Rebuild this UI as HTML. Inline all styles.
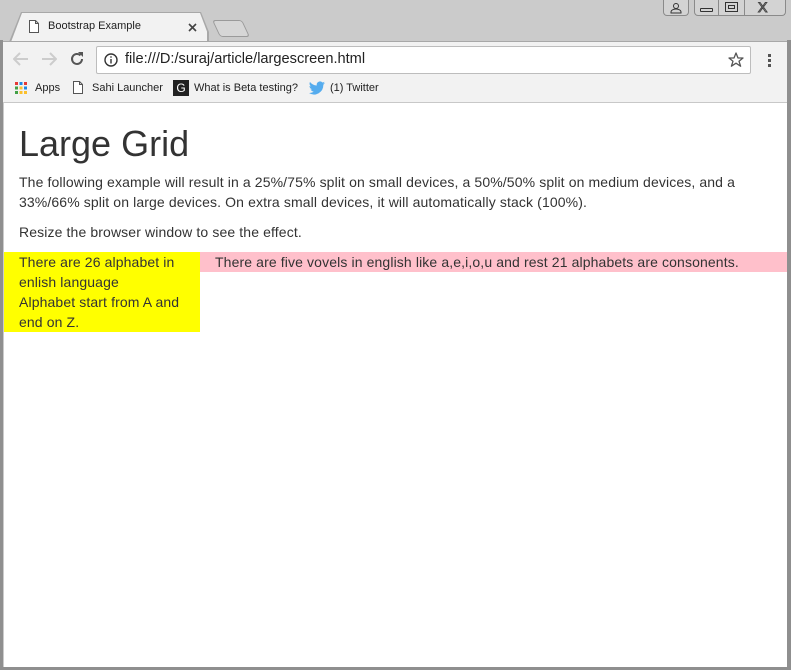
<!DOCTYPE html>
<html><head><meta charset="utf-8"><style>
*{margin:0;padding:0;box-sizing:border-box}
body{width:791px;height:670px;background:#cbcbcb;position:relative;overflow:hidden;font-family:"Liberation Sans",Arial,sans-serif}
.abs{position:absolute}
.tabbg{left:9px;top:12px;width:200px;height:30px;background:#a8a8a8;clip-path:polygon(12px 0,192px 0,204px 30px,0 30px)}
.tabin{left:11px;top:13px;width:196px;height:29px;background:#f2f2f2;clip-path:polygon(11px 0,189px 0,200px 29px,0 29px)}
.newtab{left:216px;top:20px;width:30px;height:17px;border:1px solid #9a9a9a;border-radius:3px;transform:skewX(25deg);background:#d6d6d6}
.tool{left:3px;top:41px;width:785px;height:61px;background:#f2f2f2;border-top:1px solid #a8a8a8}
.url{left:96px;top:46px;width:655px;height:28px;background:#fff;border:1px solid #bdbdbd;border-radius:2px}
.page{left:4px;top:102px;width:783px;height:565px;background:#fff;border-top:1px solid #c8c8c8}
.wbtn{top:0;height:16px;border:1px solid #8a8a8a;border-top:none;border-radius:0 0 4px 4px;background:#d3d3d3}
h1{font-weight:400;font-size:36px;color:#333;position:absolute;left:19px;top:124px;line-height:40px}
p{position:absolute;left:19px;font-size:14px;line-height:20px;color:#333;letter-spacing:0.12px}
.bm{font-size:11px;color:#222;top:82px}
</style></head><body>
<div class="abs wbtn" style="left:663px;width:26px"></div>
<svg class="abs" style="left:669px;top:2px" width="14" height="12"><circle cx="7" cy="4" r="2.5" fill="none" stroke="#333"/><path d="M2 11h10v-1a5 3 0 0 0-10 0z" fill="none" stroke="#333"/></svg>
<div class="abs wbtn" style="left:694px;width:92px"></div>
<div class="abs" style="left:718px;top:0;width:1px;height:16px;background:#8a8a8a"></div>
<div class="abs" style="left:744px;top:0;width:1px;height:16px;background:#8a8a8a"></div>
<div class="abs" style="left:700px;top:8px;width:13px;height:4px;border:1px solid #333;border-radius:1px"></div>
<div class="abs" style="left:725px;top:2px;width:13px;height:10px;border:1px solid #333"><div style="margin:2px auto;width:7px;height:4px;border:1px solid #333"></div></div>
<div class="abs" style="left:758px;top:-1px;font-size:14px;color:#fff;-webkit-text-stroke:1px #444">X</div>
<div class="abs tabbg"></div><div class="abs tabin"></div>
<div class="abs newtab"></div>
<svg class="abs" style="left:29px;top:20px" width="10" height="13"><path d="M0.5 0.5h6l3 3v9h-9z M6.5 0.5v3h3" fill="#fff" stroke="#555"/></svg>
<div class="abs" style="left:48px;top:20px;font-size:11px;color:#222">Bootstrap Example</div>
<svg class="abs" style="left:188px;top:23px" width="9" height="9"><path d="M1 1L8 8M8 1L1 8" stroke="#444" stroke-width="1.6"/></svg>
<div class="abs tool"></div>
<svg class="abs" style="left:13px;top:52px" width="16" height="14"><path d="M15 7H2M7 1L1 7l6 6" fill="none" stroke="#ccc" stroke-width="2"/></svg>
<svg class="abs" style="left:41px;top:52px" width="16" height="14"><path d="M1 7h13M9 1l6 6-6 6" fill="none" stroke="#ccc" stroke-width="2"/></svg>
<svg class="abs" style="left:69px;top:51px" width="16" height="16"><path d="M13 8a5 5 0 1 1-1.5-3.6" fill="none" stroke="#555" stroke-width="2"/><path d="M9 1h5v5z" fill="#555"/></svg>
<div class="abs url"></div>
<svg class="abs" style="left:104px;top:53px" width="14" height="14"><circle cx="7" cy="7" r="6" fill="none" stroke="#333" stroke-width="1.4"/><rect x="6.3" y="6" width="1.4" height="4.5" fill="#333"/><rect x="6.3" y="3.3" width="1.4" height="1.4" fill="#333"/></svg>
<div class="abs" style="left:125px;top:51px;font-size:14.6px;color:#222">file:///D:/suraj/article/largescreen.html</div>
<svg class="abs" style="left:728px;top:52px" width="16" height="15"><path d="M8 1l2 5h5l-4 3.2 1.6 5L8 11.2 3.4 14.2 5 9.2 1 6h5z" fill="none" stroke="#555" stroke-width="1.3" stroke-linejoin="round"/></svg>
<div class="abs" style="left:768px;top:54px;width:3px;height:3px;background:#555;box-shadow:0 5px #555,0 10px #555"></div>
<svg class="abs" style="left:15px;top:82px" width="12" height="12"><rect x="0" y="0" width="3" height="3" fill="#e53935"/><rect x="4.5" y="0" width="3" height="3" fill="#1e88e5"/><rect x="9" y="0" width="3" height="3" fill="#e53935"/><rect x="0" y="4.5" width="3" height="3" fill="#43a047"/><rect x="4.5" y="4.5" width="3" height="3" fill="#fbc02d"/><rect x="9" y="4.5" width="3" height="3" fill="#1e88e5"/><rect x="0" y="9" width="3" height="3" fill="#43a047"/><rect x="4.5" y="9" width="3" height="3" fill="#fbc02d"/><rect x="9" y="9" width="3" height="3" fill="#fbc02d"/></svg>
<div class="abs bm" style="left:35px">Apps</div>
<svg class="abs" style="left:73px;top:81px" width="10" height="13"><path d="M0.5 0.5h6l3 3v9h-9z M6.5 0.5v3h3" fill="#fff" stroke="#555"/></svg>
<div class="abs bm" style="left:92px">Sahi Launcher</div>
<div class="abs" style="left:173px;top:80px;width:16px;height:16px;background:#222;color:#fff;font-size:12px;text-align:center;line-height:16px">G</div>
<div class="abs bm" style="left:194px">What is Beta testing?</div>
<svg class="abs" style="left:309px;top:81px" width="16" height="14"><path d="M16 2c-.6.3-1.2.4-1.9.5.7-.4 1.2-1 1.4-1.8-.6.4-1.3.6-2.1.8A3.3 3.3 0 0 0 7.8 4.5 9.3 9.3 0 0 1 1 1a3.3 3.3 0 0 0 1 4.4c-.5 0-1-.2-1.5-.4 0 1.6 1.1 2.9 2.6 3.2-.5.1-1 .2-1.5.1.4 1.300 1.6 2.3 3.1 2.3A6.6 6.6 0 0 1 0 12a9.3 9.3 0 0 0 14.3-8.3c.7-.5 1.2-1 1.700-1.7z" fill="#55acee"/></svg>
<div class="abs bm" style="left:330px">(1) Twitter</div>
<div class="abs" style="left:0;top:40px;width:3px;height:630px;background:#8f8f8f"></div>
<div class="abs" style="left:787px;top:40px;width:4px;height:630px;background:#8f8f8f"></div>
<div class="abs" style="left:0;top:667px;width:791px;height:3px;background:#8f8f8f"></div>
<div class="abs page"></div>
<h1>Large Grid</h1>
<p style="top:172px;width:750px">The following example will result in a 25%/75% split on small devices, a 50%/50% split on medium devices, and a 33%/66% split on large devices. On extra small devices, it will automatically stack (100%).</p>
<p style="top:222px">Resize the browser window to see the effect.</p>
<div class="abs" style="left:4px;top:252px;width:196px;height:80px;background:#ff0"></div>
<div class="abs" style="left:200px;top:252px;width:587px;height:20px;background:#ffc0cb"></div>
<p style="top:252px;width:178px">There are 26 alphabet in enlish language<br>Alphabet start from A and end on Z.</p>
<p style="top:252px;left:215px;white-space:nowrap">There are five vovels in english like a,e,i,o,u and rest 21 alphabets are consonents.</p>
</body></html>
